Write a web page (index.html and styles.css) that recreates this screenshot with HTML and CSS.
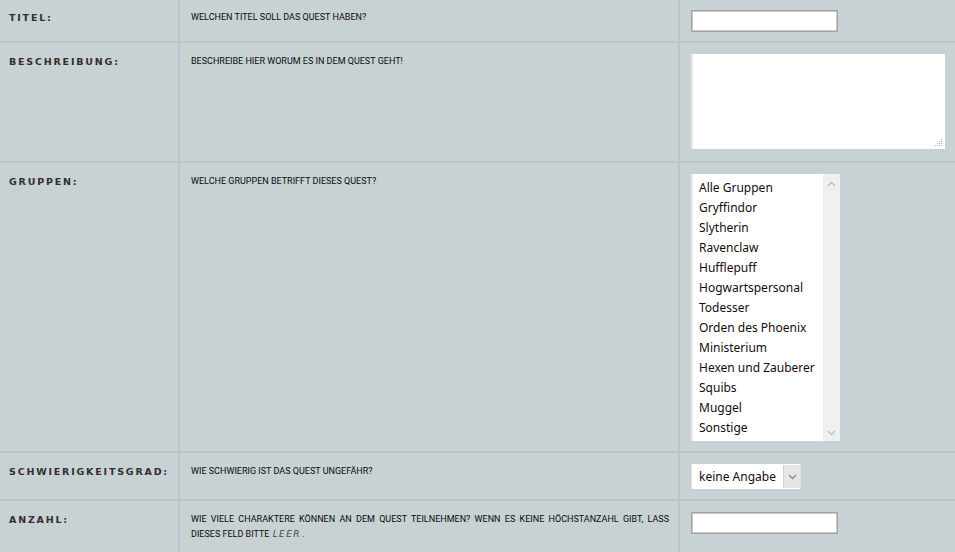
FILE: index.html
```html
<!DOCTYPE html>
<html lang="de">
<head>
<meta charset="utf-8">
<title>Quest erstellen</title>
<link rel="stylesheet" href="styles.css">
</head>
<body>
<div class="form">
  <div class="cell label first">Titel:</div>
  <div class="cell desc first">Welchen Titel soll das Quest haben?</div>
  <div class="cell field first"><div class="text-input"></div></div>

  <div class="cell label">Beschreibung:</div>
  <div class="cell desc">Beschreibe hier worum es in dem Quest geht!</div>
  <div class="cell field">
    <div class="textarea">
      <svg class="grip" width="9" height="9" viewBox="0 0 9 9">
        <rect x="7" y="1" width="1" height="1" fill="#b0b0b0"/>
        <rect x="5" y="3" width="1" height="1" fill="#b0b0b0"/><rect x="7" y="3" width="1" height="1" fill="#b0b0b0"/>
        <rect x="3" y="5" width="1" height="1" fill="#b0b0b0"/><rect x="5" y="5" width="1" height="1" fill="#b0b0b0"/><rect x="7" y="5" width="1" height="1" fill="#b0b0b0"/>
        <rect x="1" y="7" width="1" height="1" fill="#b0b0b0"/><rect x="3" y="7" width="1" height="1" fill="#b0b0b0"/><rect x="5" y="7" width="1" height="1" fill="#b0b0b0"/><rect x="7" y="7" width="1" height="1" fill="#b0b0b0"/>
      </svg>
    </div>
  </div>

  <div class="cell label">Gruppen:</div>
  <div class="cell desc">Welche Gruppen betrifft dieses Quest?</div>
  <div class="cell field">
    <div class="listbox">
      <ul class="options">
        <li>Alle Gruppen</li>
        <li>Gryffindor</li>
        <li>Slytherin</li>
        <li>Ravenclaw</li>
        <li>Hufflepuff</li>
        <li>Hogwartspersonal</li>
        <li>Todesser</li>
        <li>Orden des Phoenix</li>
        <li>Ministerium</li>
        <li>Hexen und Zauberer</li>
        <li>Squibs</li>
        <li>Muggel</li>
        <li>Sonstige</li>
      </ul>
      <div class="scrollbar">
        <svg width="9" height="6" viewBox="0 0 9 6"><path d="M1 5 L4.5 1.5 L8 5" fill="none" stroke="#c4c4c4" stroke-width="1.6"/></svg>
        <svg width="9" height="6" viewBox="0 0 9 6"><path d="M1 1 L4.5 4.5 L8 1" fill="none" stroke="#c4c4c4" stroke-width="1.6"/></svg>
      </div>
    </div>
  </div>

  <div class="cell label">Schwierigkeitsgrad:</div>
  <div class="cell desc">Wie schwierig ist das Quest ungefähr?</div>
  <div class="cell field">
    <div class="select">
      <span class="select-value">keine Angabe</span>
      <span class="select-button">
        <svg width="9" height="6" viewBox="0 0 9 6"><path d="M1 1 L4.5 4.5 L8 1" fill="none" stroke="#8a8a8a" stroke-width="1.3"/></svg>
      </span>
    </div>
  </div>

  <div class="cell label">Anzahl:</div>
  <div class="cell desc justify">Wie viele Charaktere können an dem Quest teilnehmen? Wenn es keine Höchstanzahl gibt, lass dieses Feld bitte <em class="emph">leer</em>.</div>
  <div class="cell field"><div class="text-input"></div></div>
</div>
</body>
</html>
```

FILE: styles.css
```css
html, body {
  margin: 0;
  padding: 0;
  background: #c8d1d3;
  overflow: hidden;
}

.form {
  display: grid;
  grid-template-columns: 178px 498px 1fr;
  grid-template-rows: 41px 118px 288px 46px 51px;
  gap: 2px;
  background: #bac5c8;
  width: 955px;
}

.cell {
  background: #c8d1d3;
  padding-top: 11px;
  box-sizing: border-box;
}

.cell.first {
  padding-top: 10px;
}

.label {
  padding-left: 9px;
  font-family: "DejaVu Sans", Verdana, sans-serif;
  font-weight: bold;
  font-size: 9.5px;
  letter-spacing: 1.8px;
  line-height: 15px;
  text-transform: uppercase;
  color: #352e2f;
}

.desc {
  padding-left: 11px;
  padding-right: 9px;
  font-family: Roboto, "Liberation Sans", sans-serif;
  font-size: 9px;
  line-height: 15px;
  text-transform: uppercase;
  color: #0c0c0c;
}

.justify {
  text-align: justify;
}

.emph {
  font-family: "DejaVu Sans", Verdana, sans-serif;
  font-style: italic;
  letter-spacing: 1.4px;
  margin-left: 1px;
  margin-right: 1px;
  color: #4a4a4a;
}

.field {
  padding-left: 11px;
}

.text-input {
  width: 147px;
  height: 22px;
  box-sizing: border-box;
  background: #fff;
  border: 1px solid #a3a3a3;
  box-shadow: inset 0 0 0 1px #c9c9c9;
}

.textarea {
  position: relative;
  width: 254px;
  height: 95px;
  box-sizing: border-box;
  background: #fff;
  border-left: 2px solid #e9e9e9;
  box-shadow: inset 1px 0 0 #ffffff;
}

.grip {
  position: absolute;
  right: 2px;
  bottom: 2px;
}

.listbox {
  display: flex;
  width: 149px;
  height: 267px;
  box-sizing: border-box;
  background: #fff;
  border-left: 2px solid #ececec;
}

.options {
  list-style: none;
  margin: 0;
  padding: 4px 0 0 6px;
  flex: 1;
  font-family: "Noto Sans", "Open Sans", sans-serif;
  font-size: 12px;
  line-height: 20px;
  color: #150c0c;
}

.scrollbar {
  width: 17px;
  background: #f0f0f0;
  display: flex;
  flex-direction: column;
  justify-content: space-between;
  align-items: center;
  padding: 7px 0 5px;
  box-sizing: border-box;
}

.select {
  display: flex;
  width: 110px;
  height: 25px;
  box-sizing: border-box;
  background: #fff;
  border-left: 1px solid #e2e2e2;
  border-right: 1px solid #e2e2e2;
}

.select-value {
  flex: 1;
  padding-left: 7px;
  font-family: "Noto Sans", "Open Sans", sans-serif;
  font-size: 12px;
  line-height: 25px;
  color: #150c0c;
}

.select-button {
  width: 16px;
  display: flex;
  align-items: center;
  justify-content: center;
  background: #e6e6e6;
  border-left: 1px solid #d0d0d0;
  margin: 1px 0;
}
```
